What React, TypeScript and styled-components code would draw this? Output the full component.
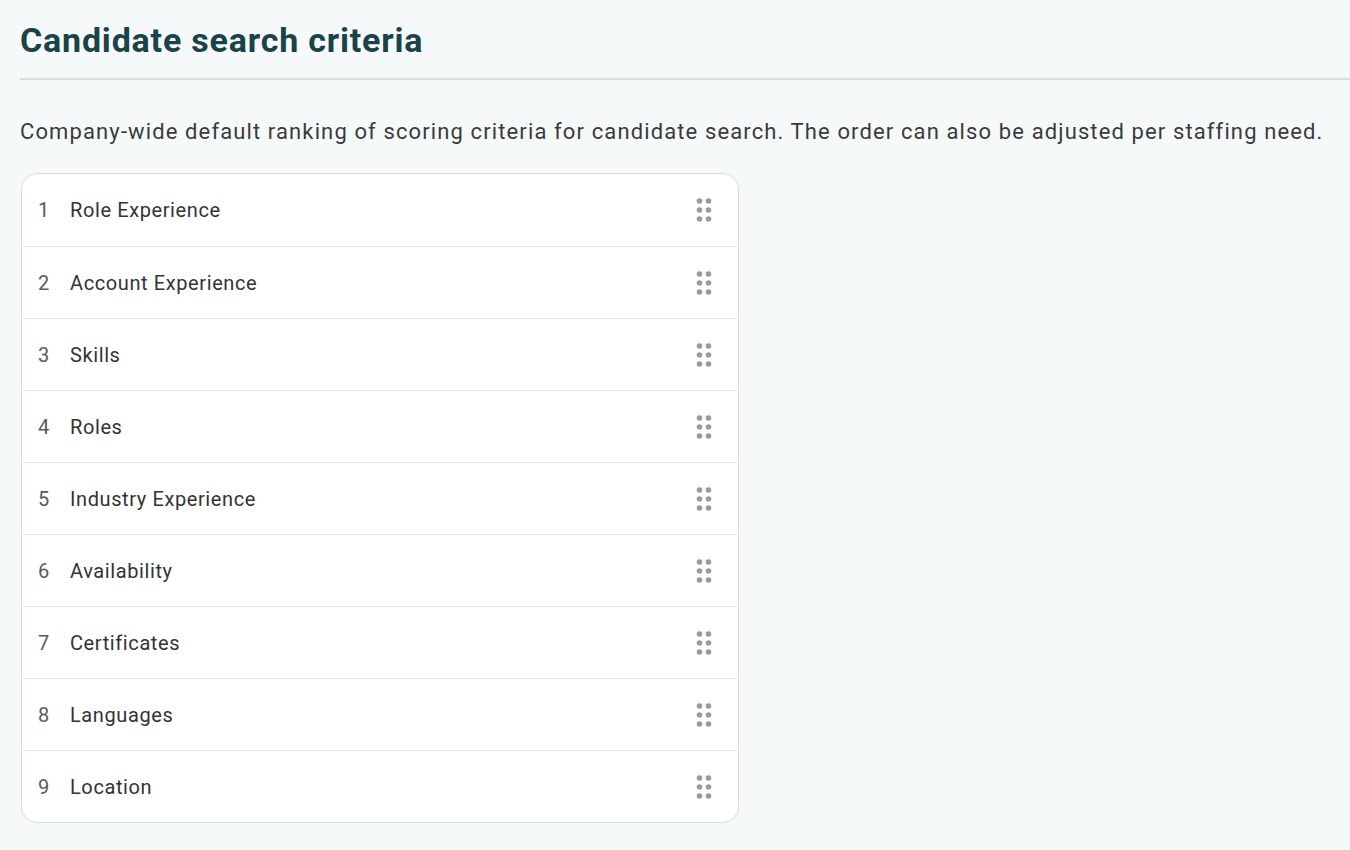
import React from "react";
import styled, { createGlobalStyle } from "styled-components";

const GlobalStyle = createGlobalStyle`
  html, body {
    margin: 0;
    padding: 0;
    background: #f6f9fa;
    font-family: Roboto, "Liberation Sans", sans-serif;
  }
`;

const Page = styled.div`
  padding: 16px 0 0 20px;
  min-height: 850px;
  box-sizing: border-box;
`;

const Header = styled.header`
  border-bottom: 2px solid #dadedf;
  padding-bottom: 14px;
`;

const Title = styled.h1`
  margin: 0;
  font-size: 34px;
  line-height: 48px;
  font-weight: 700;
  color: #1a4349;
  letter-spacing: 0.8px;
`;

const Description = styled.p`
  margin: 30px 0 19px;
  font-size: 22px;
  line-height: 44px;
  letter-spacing: 1.12px;
  color: #3b3b3b;
  white-space: nowrap;
`;

const List = styled.ol`
  list-style: none;
  margin: 0 0 0 1px;
  padding: 0;
  width: 716px;
  background: #fff;
  border: 1px solid #d9dcdd;
  border-radius: 16px;
  overflow: hidden;
`;

const Row = styled.li`
  display: flex;
  align-items: center;
  box-sizing: border-box;
  height: 72px;
  padding: 0 26px 0 16px;
  font-size: 20px;
  letter-spacing: 0.6px;
  color: #333;
  & + & {
    border-top: 1px solid #e6e7e8;
  }
`;

const Rank = styled.span`
  width: 32px;
  color: #5a5a5a;
`;

const Label = styled.span`
  flex: 1;
`;

const Handle = styled.svg`
  width: 16px;
  height: 24px;
  cursor: grab;
`;

const criteria = [
  "Role Experience",
  "Account Experience",
  "Skills",
  "Roles",
  "Industry Experience",
  "Availability",
  "Certificates",
  "Languages",
  "Location",
];

function DragHandle() {
  const dots = [];
  for (const y of [3, 12, 21]) {
    for (const x of [3.5, 12.5]) {
      dots.push(<circle key={`${x}-${y}`} cx={x} cy={y} r={2.8} fill="#9b9b9b" />);
    }
  }
  return <Handle viewBox="0 0 16 24">{dots}</Handle>;
}

export default function App() {
  return (
    <>
      <GlobalStyle />
      <Page>
        <Header>
          <Title>Candidate search criteria</Title>
        </Header>
        <Description>
          Company-wide default ranking of scoring criteria for candidate search. The order can also be adjusted per staffing need.
        </Description>
        <List>
          {criteria.map((c, i) => (
            <Row key={c}>
              <Rank>{i + 1}</Rank>
              <Label>{c}</Label>
              <DragHandle />
            </Row>
          ))}
        </List>
      </Page>
    </>
  );
}
